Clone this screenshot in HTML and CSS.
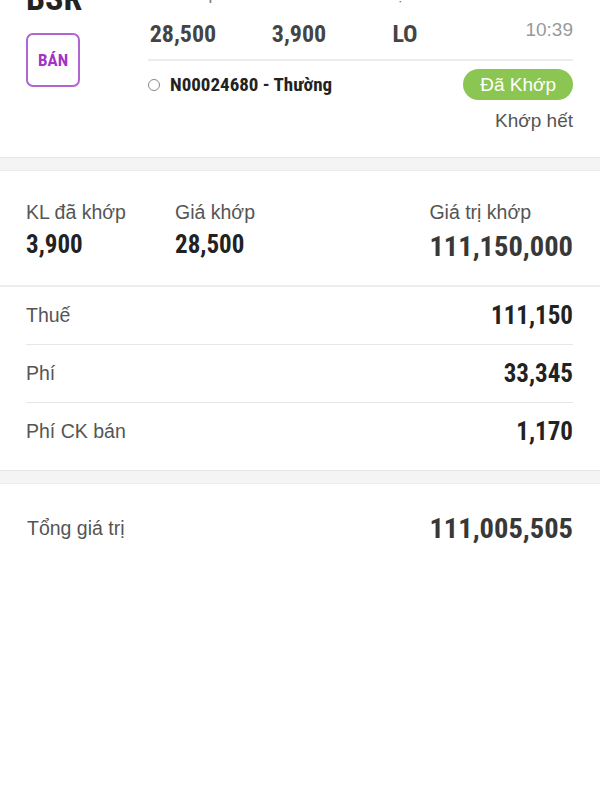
FILE: index.html
```html
<!DOCTYPE html>
<html lang="vi">
<head>
  <meta charset="UTF-8" />
  <meta name="viewport" content="width=device-width, initial-scale=1.0"/>
  <title>Chi tiết lệnh</title>
  <link rel="stylesheet" href="styles.css">
</head>
<body>

  <!-- thông tin lệnh -->
  <section class="order">
    <div class="order-side">
      <div class="ticker">BSR</div>
      <div class="side-badge">BÁN</div>
    </div>
    <div class="order-main">
      <div class="order-grid">
        <div class="order-label">Giá khớp</div>
        <div class="order-label">KL</div>
        <div class="order-label">Lệnh</div>
        <div class="order-label right">02/05/2022</div>
        <div class="order-value">28,500</div>
        <div class="order-value">3,900</div>
        <div class="order-value">LO</div>
        <div class="order-time">10:39</div>
      </div>
      <div class="order-foot">
        <div class="order-id"><span class="radio"></span>N00024680 - Thường</div>
        <div class="order-status">
          <span class="status-pill">Đã Khớp</span>
          <span class="status-note">Khớp hết</span>
        </div>
      </div>
    </div>
  </section>

  <div class="gap"></div>

  <!-- khớp lệnh -->
  <section class="match">
    <div class="match-col">
      <div class="label">KL đã khớp</div>
      <div class="num">3,900</div>
    </div>
    <div class="match-col">
      <div class="label">Giá khớp</div>
      <div class="num">28,500</div>
    </div>
    <div class="match-col">
      <div class="label">Giá trị khớp</div>
      <div class="num big">111,150,000</div>
    </div>
  </section>

  <section class="fees">
    <div class="fee-row">
      <div class="label">Thuế</div>
      <div class="num">111,150</div>
    </div>
    <div class="fee-row">
      <div class="label">Phí</div>
      <div class="num">33,345</div>
    </div>
    <div class="fee-row">
      <div class="label">Phí CK bán</div>
      <div class="num">1,170</div>
    </div>
  </section>

  <div class="gap"></div>

  <section class="total">
    <div class="label">Tổng giá trị</div>
    <div class="num big">111,005,505</div>
  </section>

</body>
</html>
```

FILE: styles.css
```css
body {
  font-family: "Liberation Sans", Arial, sans-serif;
  background-color: #ffffff;
  color: #222;
  margin: 0;
  padding: 0;
}

.num {
  font-family: "Roboto Condensed", Roboto, sans-serif;
  font-weight: bold;
  font-size: 25px;
  color: #222;
}

.num.big {
  font-size: 28.5px;
  color: #383838;
}

.label {
  font-size: 19.5px;
  color: #555;
}

/* thông tin lệnh */
.order {
  display: flex;
  margin-top: -17px;
  padding: 0 27px 25px 26px;
}

.order-side {
  width: 122px;
  flex-shrink: 0;
}

.ticker {
  margin-top: -3px;
  font-family: "Roboto Condensed", Roboto, sans-serif;
  font-weight: bold;
  font-size: 34px;
  line-height: 36px;
  color: #222;
}

.side-badge {
  width: 54px;
  height: 54px;
  margin-top: 17px;
  border: 2px solid #b264d2;
  border-radius: 7px;
  box-sizing: border-box;
  display: flex;
  align-items: center;
  justify-content: center;
  font-family: "Roboto Condensed", Roboto, sans-serif;
  font-weight: bold;
  font-size: 17px;
  color: #a334c6;
}

.order-main {
  flex: 1;
}

.order-grid {
  display: grid;
  grid-template-columns: 70px 60px 50px 1fr;
  column-gap: 51px;
  row-gap: 10px;
  text-align: center;
  padding-bottom: 8px;
  border-bottom: 2px solid #ececec;
}

.order-label {
  font-size: 17px;
  line-height: 24px;
  color: #777;
}

.order-value {
  font-family: "Roboto Condensed", Roboto, sans-serif;
  font-weight: bold;
  font-size: 24px;
  line-height: 34px;
  color: #444;
}

.order-time {
  text-align: right;
  font-size: 19px;
  line-height: 26px;
  color: #999;
}

.right {
  text-align: right;
}

.order-foot {
  display: flex;
  justify-content: space-between;
  padding-top: 8px;
}

.order-id {
  display: flex;
  align-items: center;
  gap: 10px;
  height: 31px;
  font-family: "Roboto Condensed", Roboto, sans-serif;
  font-weight: bold;
  font-size: 19px;
  color: #222;
}

.radio {
  width: 12px;
  height: 12px;
  border: 1.5px solid #888;
  border-radius: 50%;
  box-sizing: border-box;
}

.order-status {
  display: flex;
  flex-direction: column;
  align-items: flex-end;
  gap: 10px;
}

.status-pill {
  background-color: #8bc652;
  color: #fff;
  font-size: 19px;
  line-height: 31px;
  padding: 0 17px;
  border-radius: 16px;
}

.status-note {
  font-size: 19px;
  color: #555;
}

.gap {
  height: 12px;
  background-color: #f4f4f4;
  border-top: 1px solid #e6e6e6;
  border-bottom: 1px solid #ececec;
}

/* khớp lệnh */
.match {
  display: grid;
  grid-template-columns: 149px 1fr auto;
  padding: 30px 27px 22px 26px;
  border-bottom: 2px solid #ececec;
}

.match .label {
  margin-bottom: 6px;
}

.fees {
  padding: 0 27px 10px 26px;
}

.fee-row {
  display: flex;
  justify-content: space-between;
  align-items: center;
  height: 57px;
  border-bottom: 1px solid #e6e6e6;
}

.fee-row:last-child {
  border-bottom: none;
}

.total {
  display: flex;
  justify-content: space-between;
  align-items: center;
  padding: 28px 27px;
}
```
